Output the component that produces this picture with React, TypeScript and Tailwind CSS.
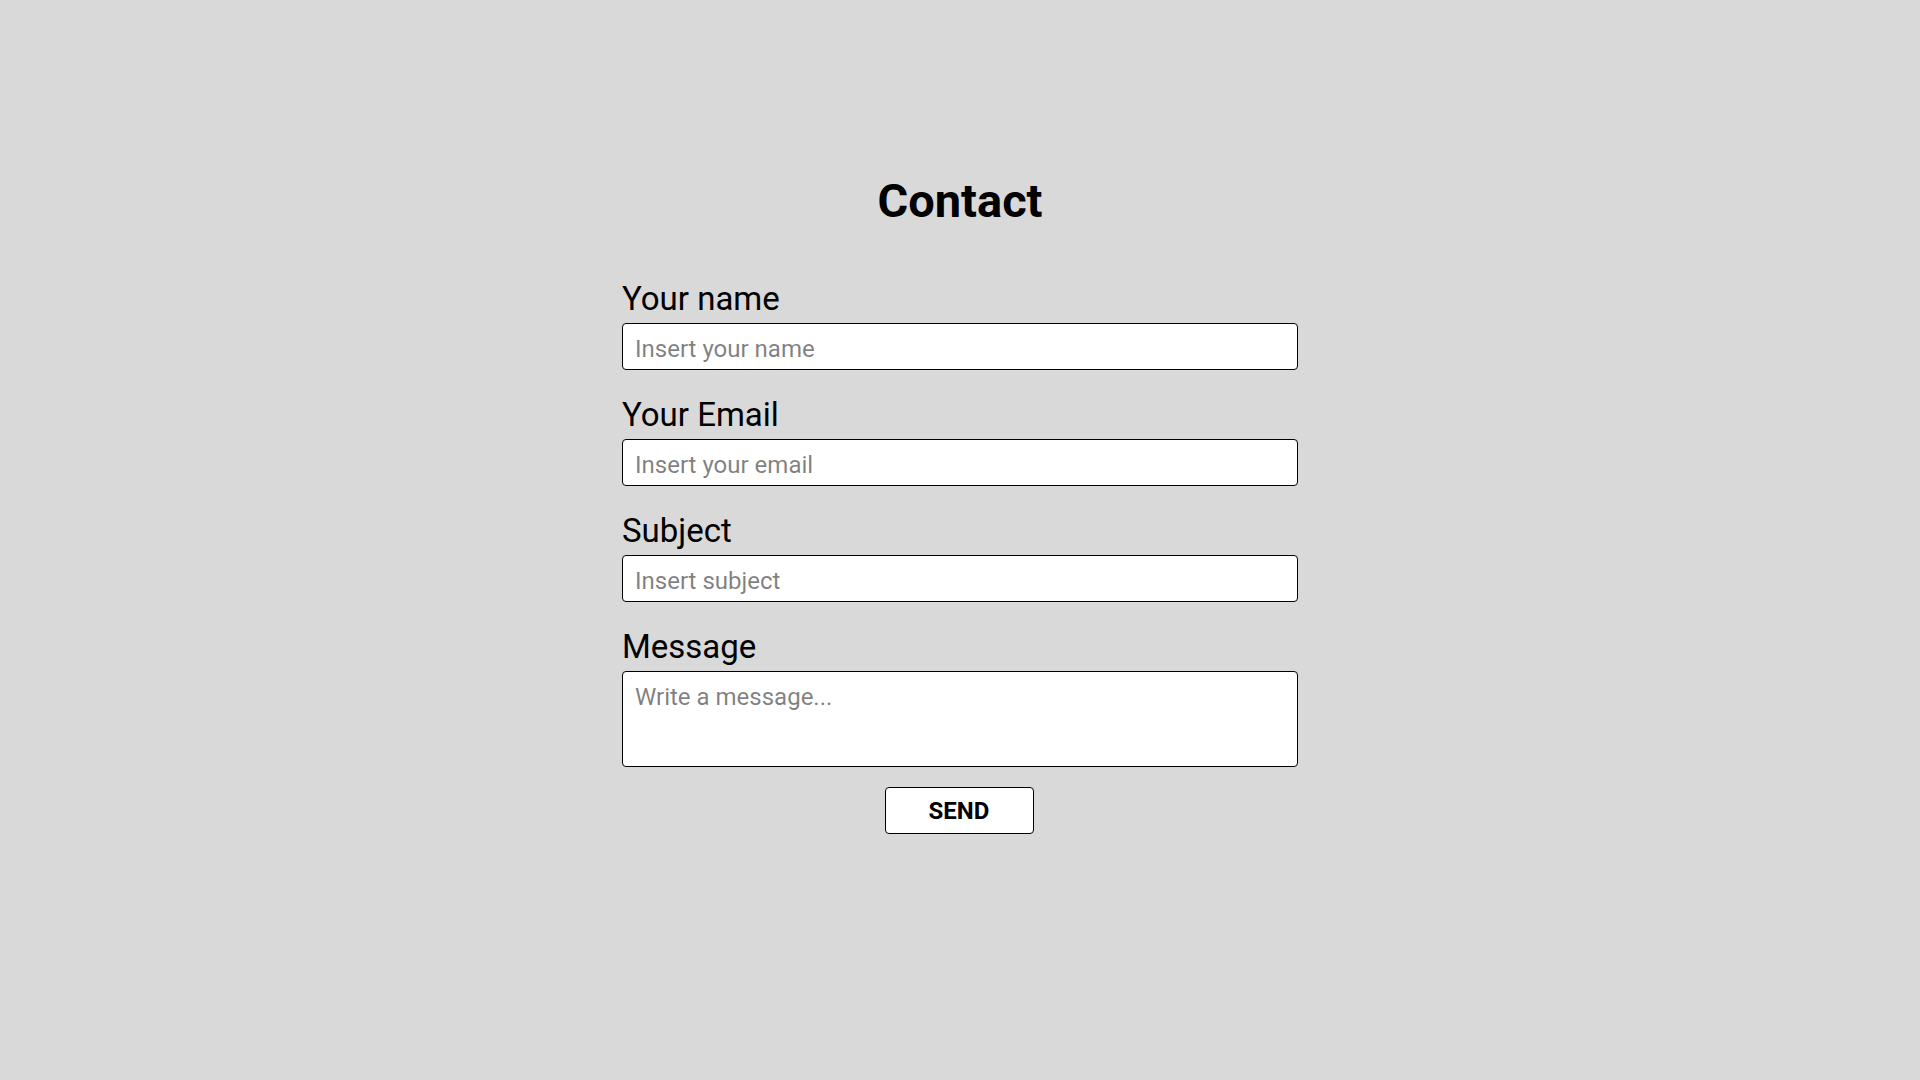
import { useState } from "react";

// Simple contact form, centered on a light grey page
const FONT = "font-['Roboto','Liberation_Sans',sans-serif]";

type FieldProps = {
  label: string;
  placeholder: string;
  multiline?: boolean;
};

function Field({ label, placeholder, multiline }: FieldProps) {
  return (
    <div className="flex flex-col">
      <label className="text-[33px] leading-[37px] text-black mb-[6px]">{label}</label>
      {multiline ? (
        <textarea
          placeholder={placeholder}
          className="h-[96px] w-full resize-none rounded border border-black bg-white px-3 pt-[7px] text-[24px] text-black outline-none"
        />
      ) : (
        <input
          type="text"
          placeholder={placeholder}
          className="h-[47px] w-full rounded border border-black bg-white px-3 pt-1 text-[24px] text-black outline-none"
        />
      )}
    </div>
  );
}

export default function App() {
  const [sent, setSent] = useState(false);

  return (
    <div className={`min-h-screen bg-[#d9d9d9] ${FONT}`}>
      <div className="mx-auto flex w-[676px] flex-col pt-[177px]">
        <h1 className="text-center text-[47px] font-bold leading-[47px] text-black">Contact</h1>

        <form
          className="mt-[56px] flex flex-col gap-[26px]"
          onSubmit={(e) => {
            e.preventDefault();
            setSent(true);
          }}
        >
          <Field label="Your name" placeholder="Insert your name" />
          <Field label="Your Email" placeholder="Insert your email" />
          <Field label="Subject" placeholder="Insert subject" />
          <Field label="Message" placeholder="Write a message..." multiline />
        </form>

        <div className="mt-[20px] flex justify-center pr-[2px]">
          <button
            type="button"
            onClick={() => setSent(!sent)}
            className="h-[47px] w-[149px] rounded border border-black bg-white text-[24px] font-bold text-black"
          >
            SEND
          </button>
        </div>
      </div>
    </div>
  );
}
